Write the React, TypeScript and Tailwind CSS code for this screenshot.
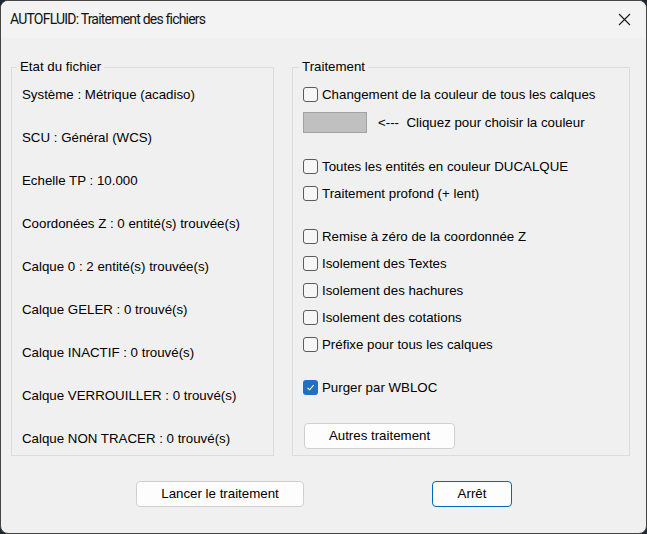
const leftRows = [
  "Système : Métrique (acadiso)",
  "SCU : Général (WCS)",
  "Echelle TP : 10.000",
  "Coordonées Z : 0 entité(s) trouvée(s)",
  "Calque 0 : 2 entité(s) trouvée(s)",
  "Calque GELER : 0 trouvé(s)",
  "Calque INACTIF : 0 trouvé(s)",
  "Calque VERROUILLER : 0 trouvé(s)",
  "Calque NON TRACER : 0 trouvé(s)",
];

function CheckRow({ label, checked = false, className = "" }: { label: string; checked?: boolean; className?: string }) {
  return (
    <div className={`flex h-[27px] items-center ${className}`}>
      {checked ? (
        <span className="flex h-[15px] w-[15px] items-center justify-center rounded-[3px] bg-[#1f6fc5]">
          <svg width="9" height="9" viewBox="0 0 9 9" fill="none">
            <path d="M1.5 4.8 L3.6 6.8 L7.6 2.2" stroke="white" strokeWidth="1.1" />
          </svg>
        </span>
      ) : (
        <span className="h-[15px] w-[15px] rounded-[3px] border border-[#5c5c5c] bg-[#f6f6f6]" />
      )}
      <span className="ml-[4px]">{label}</span>
    </div>
  );
}

export default function App() {
  return (
    <div className="h-[534px] w-[647px] bg-[#1f2631]">
      <div
        className="flex h-[534px] w-[647px] flex-col overflow-hidden rounded-[8px] border border-[#454545] bg-[#f0f0f0] text-[13.3px] text-black"
        style={{ fontFamily: '"Liberation Sans", Arial, sans-serif' }}
      >
        <div className="flex h-[37px] shrink-0 items-center justify-between bg-[#f3f3f3] pl-[9px] pr-[15px]">
          <span className="text-[14px] tracking-[-0.8px] text-[#111]" style={{ fontFamily: "Roboto, sans-serif" }}>
            AUTOFLUID: Traitement des fichiers
          </span>
          <svg width="13" height="13" viewBox="0 0 13 13" fill="none">
            <path d="M1 1 L12 12 M12 1 L1 12" stroke="#1a1a1a" strokeWidth="1.1" />
          </svg>
        </div>

        <div className="mt-[21px] flex pl-[10px]">
          <fieldset className="h-[397px] w-[263px] border border-[#dcdcdc] pl-[10px] pt-[12px]">
            <legend className="ml-[-5px] px-[3px] leading-[16px]">Etat du fichier</legend>
            <div className="flex flex-col gap-[27px]">
              {leftRows.map((r) => (
                <div key={r} className="leading-[16px]">
                  {r}
                </div>
              ))}
            </div>
          </fieldset>

          <fieldset className="ml-[18px] h-[397px] w-[338px] border border-[#dcdcdc] pl-[10px] pt-[6px]">
            <legend className="ml-[-4px] px-[3px] leading-[16px]">Traitement</legend>
            <CheckRow label="Changement de la couleur de tous les calques" />
            <div className="mt-[4px] flex h-[21px] items-center">
              <span className="h-[21px] w-[64px] border border-[#a3a3a3] bg-[#c0c0c0]" />
              <span className="ml-[11px] whitespace-pre">{"<---  Cliquez pour choisir la couleur"}</span>
            </div>
            <CheckRow className="mt-[20px]" label="Toutes les entités en couleur DUCALQUE" />
            <CheckRow label="Traitement profond (+ lent)" />
            <CheckRow className="mt-[16px]" label="Remise à zéro de la coordonnée Z" />
            <CheckRow label="Isolement des Textes" />
            <CheckRow label="Isolement des hachures" />
            <CheckRow label="Isolement des cotations" />
            <CheckRow label="Préfixe pour tous les calques" />
            <CheckRow className="mt-[16px]" label="Purger par WBLOC" checked />
            <button className="ml-[1px] mt-[22px] h-[26px] w-[151px] rounded-[4px] border border-[#d0d0d0] bg-[#fdfdfd]">
              Autres traitement
            </button>
          </fieldset>
        </div>

        <div className="mt-[25px] flex pl-[135px]">
          <button className="h-[26px] w-[168px] rounded-[4px] border border-[#d0d0d0] bg-[#fdfdfd]">
            Lancer le traitement
          </button>
          <button className="ml-[128px] h-[26px] w-[80px] rounded-[4px] border border-[#0067c0] bg-[#fdfdfd]">
            Arrêt
          </button>
        </div>
      </div>
    </div>
  );
}
